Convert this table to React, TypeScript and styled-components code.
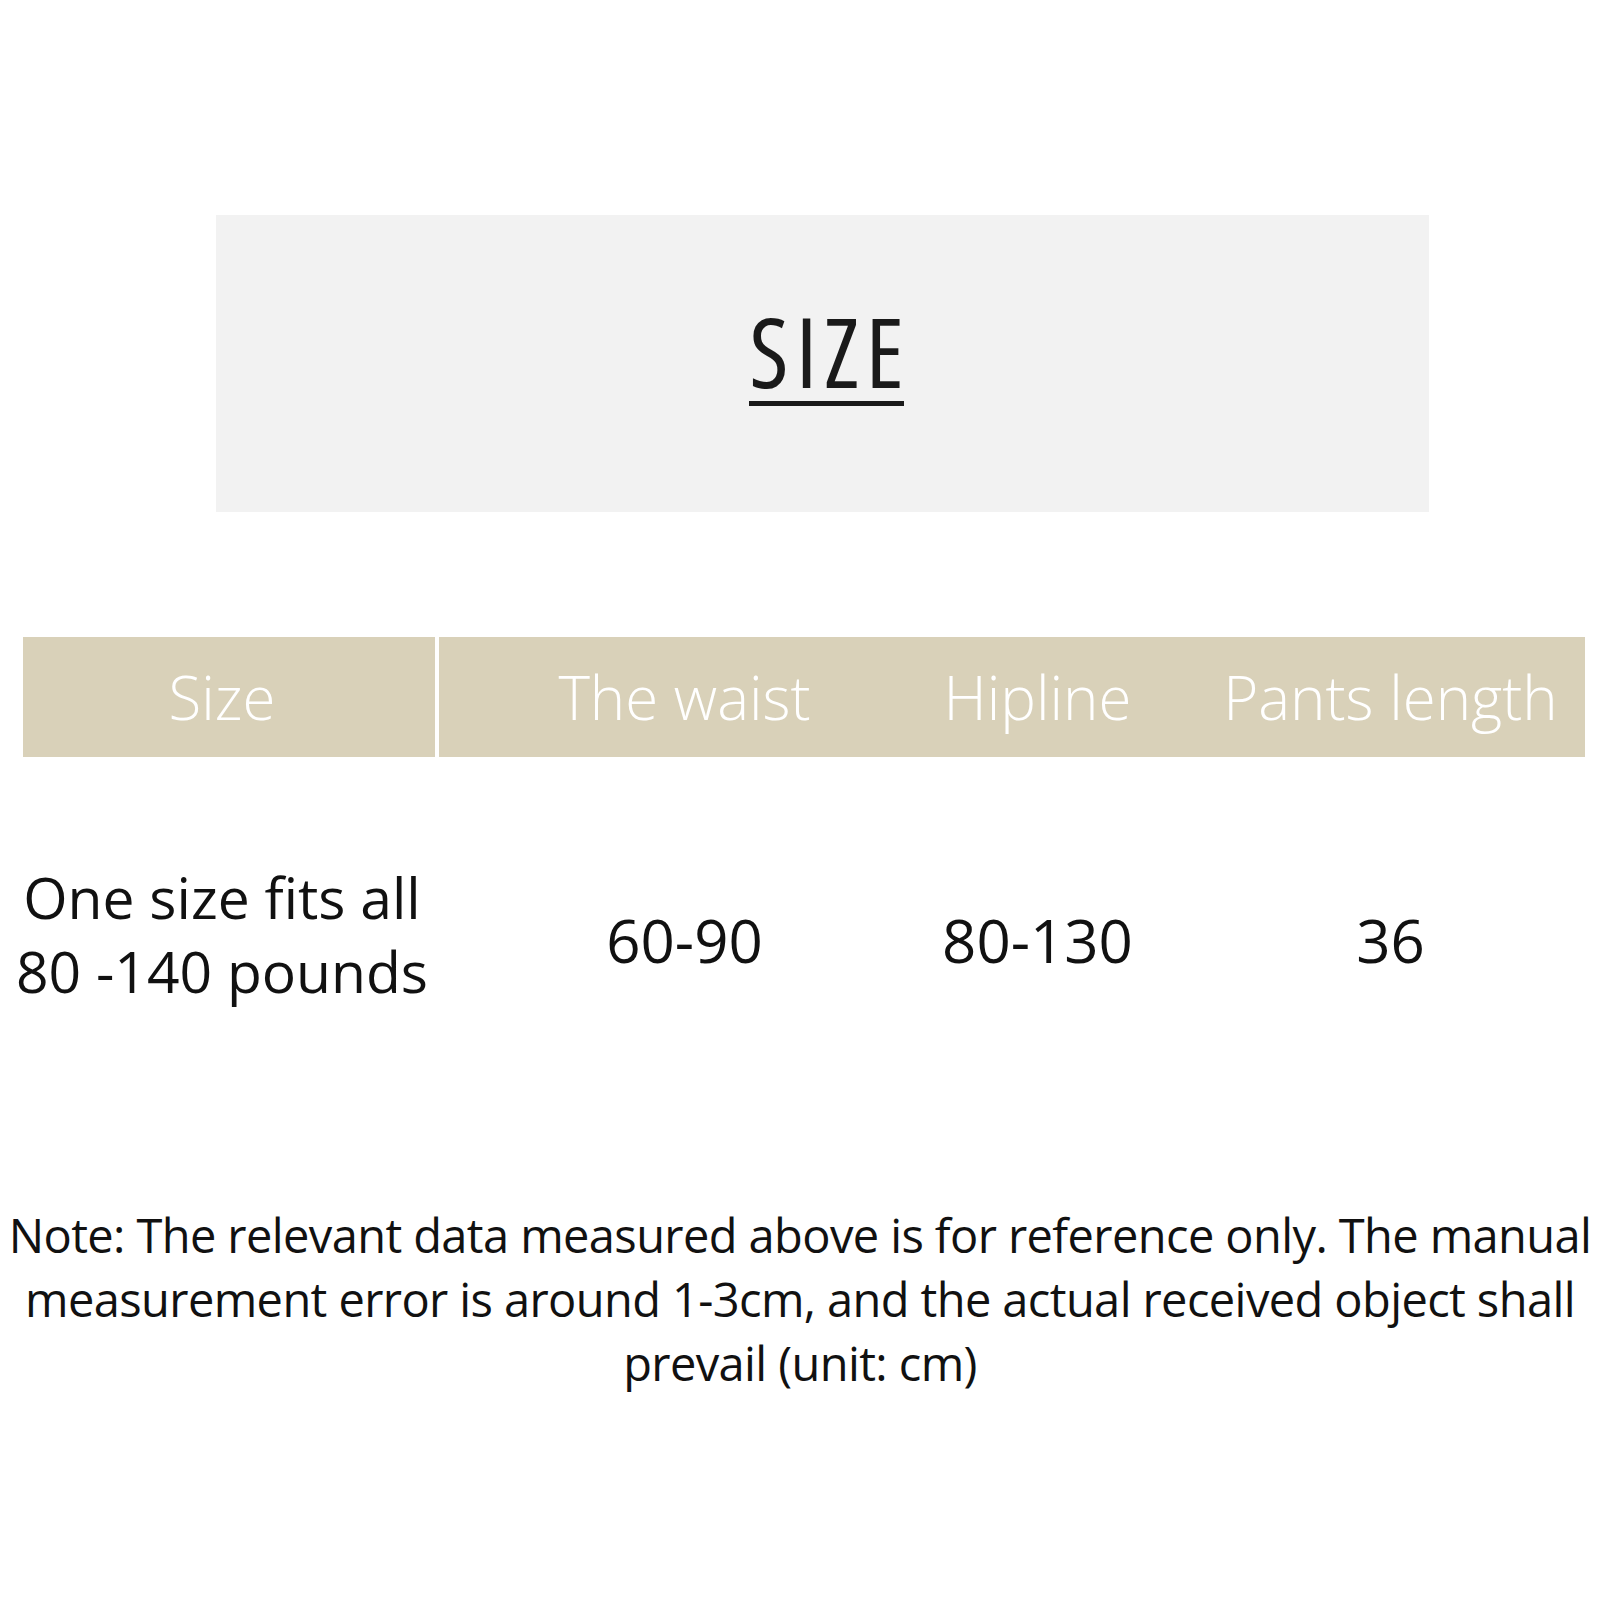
import styled, { createGlobalStyle } from 'styled-components';

const GlobalStyle = createGlobalStyle`
    html, body {
        margin: 0;
        padding: 0;
        background: #ffffff;
    }
    body {
        font-family: 'Open Sans', 'Noto Sans', sans-serif;
        color: #111111;
    }
`;

const Page = styled.div`
    width: 1600px;
    height: 1600px;
    padding-top: 215px;
    box-sizing: border-box;
    display: flex;
    flex-direction: column;
`;

const TitleBox = styled.div`
    margin-left: 216px;
    width: 1213px;
    height: 297px;
    background: #f2f2f2;
    display: flex;
    align-items: center;
    justify-content: center;
`;

const Title = styled.h1`
    margin: 0 0 18px 8px;
    font-family: 'Open Sans', 'Noto Sans', sans-serif;
    font-weight: 380;
    font-stretch: 80%;
    font-size: 96px;
    line-height: 1;
    color: #1a1a1a;
    padding-bottom: 2px;
    border-bottom: 5px solid #1a1a1a;
`;

const TitleLetters = styled.span`
    letter-spacing: 7px;
    margin-right: -7px;
`;

const Table = styled.div`
    margin: 125px 0 0 23px;
    width: 1562px;
    display: flex;
    flex-direction: column;
`;

const Row = styled.div<{ $head?: boolean }>`
    display: grid;
    grid-template-columns: 412px 1fr;
    column-gap: 4px;
    height: ${({ $head }) => ($head ? '120px' : '366px')};
`;

const FirstCell = styled.div<{ $head?: boolean }>`
    display: flex;
    align-items: center;
    justify-content: center;
    padding-right: 14px;
    background: ${({ $head }) => ($head ? '#d9d1b9' : 'transparent')};
`;

const Measures = styled.div<{ $head?: boolean }>`
    display: grid;
    grid-template-columns: repeat(3, 353px);
    padding-left: 69px;
    align-items: center;
    background: ${({ $head }) => ($head ? '#d9d1b9' : 'transparent')};
`;

const HeadText = styled.span`
    font-size: 60px;
    font-weight: 300;
    color: #ffffff;
    text-align: center;
    white-space: nowrap;
`;

const CellText = styled.span`
    font-size: 60px;
    font-weight: 400;
    line-height: 76px;
    text-align: center;
    white-space: nowrap;
`;

const SizeText = styled(CellText)`
    font-size: 57px;
    line-height: 74px;
    margin-bottom: 12px;
`;

const Note = styled.p`
    margin: 80px 0 0 0;
    font-size: 47px;
    line-height: 64px;
    letter-spacing: -0.6px;
    text-align: center;
    white-space: nowrap;
    color: #111111;
`;

const headers = ['The waist', 'Hipline', 'Pants length'];
const values = ['60-90', '80-130', '36'];

export default function App() {
    return (
        <>
            <GlobalStyle />
            <Page>
                <TitleBox>
                    <Title>
                        <TitleLetters>SIZE</TitleLetters>
                    </Title>
                </TitleBox>
                <Table>
                    <Row $head>
                        <FirstCell $head>
                            <HeadText>Size</HeadText>
                        </FirstCell>
                        <Measures $head>
                            {headers.map((h) => (
                                <HeadText key={h}>{h}</HeadText>
                            ))}
                        </Measures>
                    </Row>
                    <Row>
                        <FirstCell>
                            <SizeText>
                                One size fits all
                                <br />
                                80 -140 pounds
                            </SizeText>
                        </FirstCell>
                        <Measures>
                            {values.map((v) => (
                                <CellText key={v}>{v}</CellText>
                            ))}
                        </Measures>
                    </Row>
                </Table>
                <Note>
                    Note: The relevant data measured above is for reference only. The manual
                    <br />
                    measurement error is around 1-3cm, and the actual received object shall
                    <br />
                    prevail (unit: cm)
                </Note>
            </Page>
        </>
    );
}
